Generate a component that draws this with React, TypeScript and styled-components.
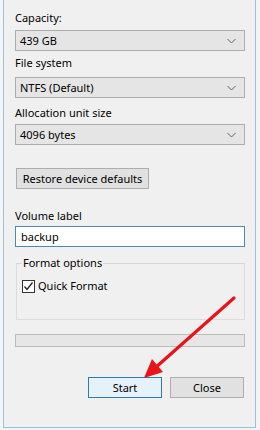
import React from 'react';
import styled, { createGlobalStyle } from 'styled-components';

const GlobalStyle = createGlobalStyle`
  html, body {
    margin: 0;
    padding: 0;
    background: #f4f4f4;
  }
  body {
    font-family: "Noto Sans", "Open Sans", Arial, sans-serif;
    font-size: 11px;
    color: #000;
  }
`;

// Dialog frame, top cut off in the screenshot
const Window = styled.div`
  position: relative;
  box-sizing: border-box;
  margin-left: 3px;
  width: 253px;
  height: 428px;
  background: #f0f0f0;
  border: 1px solid #9dc1dc;
  border-top: none;
  padding: 10px 9px 0 11px;
  display: flex;
  flex-direction: column;
`;

const Label = styled.div<{ $top?: number }>`
  line-height: 16px;
  height: 16px;
  margin-top: ${p => p.$top ?? 0}px;
  white-space: nowrap;
`;

const Combo = styled.div<{ $top?: number }>`
  box-sizing: border-box;
  width: 230px;
  height: 21px;
  margin-top: ${p => p.$top ?? 4}px;
  background: #e5e5e5;
  border: 1px solid #adadad;
  display: flex;
  align-items: center;
  justify-content: space-between;
  padding: 0 8px 0 4px;
`;

const Chevron = () => (
  <svg width="9" height="6" viewBox="0 0 9 6">
    <path d="M0.5 1 L4.5 5 L8.5 1" fill="none" stroke="#606060" strokeWidth="1" />
  </svg>
);

const Button = styled.button<{ $primary?: boolean; $width: number }>`
  box-sizing: border-box;
  width: ${p => p.$width}px;
  height: 21px;
  padding: 0;
  font: inherit;
  color: #000;
  background: ${p => (p.$primary ? '#e5f1fb' : '#e1e1e1')};
  border: 1px solid ${p => (p.$primary ? '#2f7bb0' : '#adadad')};
  border-radius: 0;
`;

const RestoreRow = styled.div`
  margin-top: 23px;
  padding-left: 1px;
`;

const TextInput = styled.div`
  box-sizing: border-box;
  width: 230px;
  height: 21px;
  margin-top: 2px;
  background: #fff;
  border: 1px solid #4f88ad;
  display: flex;
  align-items: center;
  padding-left: 5px;
`;

const GroupBox = styled.fieldset`
  box-sizing: border-box;
  width: 229px;
  height: 65px;
  margin: 8px 0 0 1px;
  padding: 4px 5px 0;
  border: 1px solid #dcdcdc;
  border-top-color: #d5d5d5;
  min-inline-size: 0;
`;

const Legend = styled.legend`
  padding: 0 1px;
  line-height: 16px;
`;

const CheckRow = styled.label`
  display: flex;
  align-items: center;
  gap: 3px;
  margin-top: 3px;
  line-height: 16px;
`;

const CheckBox = styled.span`
  box-sizing: border-box;
  width: 13px;
  height: 13px;
  background: #fff;
  border: 1px solid #333;
  display: flex;
  align-items: center;
  justify-content: center;
`;

const Progress = styled.div`
  box-sizing: border-box;
  width: 230px;
  height: 13px;
  margin-top: 14px;
  background: #e6e6e6;
  border: 1px solid #bcbcbc;
`;

const ButtonRow = styled.div`
  display: flex;
  justify-content: flex-end;
  gap: 8px;
  margin-top: 30px;
  padding-right: 2px;
`;

const ArrowOverlay = styled.svg`
  position: absolute;
  left: -3px;
  top: 0;
  pointer-events: none;
`;

const fields = [
  { label: 'Capacity:', value: '439 GB', top: 0, gap: 4 },
  { label: 'File system', value: 'NTFS (Default)', top: 4, gap: 6 },
  { label: 'Allocation unit size', value: '4096 bytes', top: 7, gap: 3 },
];

export default function App() {
  return (
    <>
      <GlobalStyle />
      <Window>
        {fields.map(f => (
          <React.Fragment key={f.label}>
            <Label $top={f.top}>{f.label}</Label>
            <Combo $top={f.gap}>
              <span>{f.value}</span>
              <Chevron />
            </Combo>
          </React.Fragment>
        ))}

        <RestoreRow>
          <Button $width={133}>Restore device defaults</Button>
        </RestoreRow>

        <Label $top={19}>Volume label</Label>
        <TextInput>backup</TextInput>

        <GroupBox>
          <Legend>Format options</Legend>
          <CheckRow>
            <CheckBox>
              <svg width="11" height="11" viewBox="0 0 11 11">
                <path d="M1.5 5.5 L4 8.5 L9.5 1.5" fill="none" stroke="#222" strokeWidth="1.3" />
              </svg>
            </CheckBox>
            Quick Format
          </CheckRow>
        </GroupBox>

        <Progress />

        <ButtonRow>
          <Button $primary $width={74}>Start</Button>
          <Button $width={74}>Close</Button>
        </ButtonRow>

        <ArrowOverlay width="260" height="430" viewBox="0 0 260 430">
          <line x1="233" y1="298" x2="154" y2="368" stroke="#e8141a" strokeWidth="3.2" strokeLinecap="round" />
          <polygon points="143,378 151,359 162,372" fill="#e8141a" />
        </ArrowOverlay>
      </Window>
    </>
  );
}
